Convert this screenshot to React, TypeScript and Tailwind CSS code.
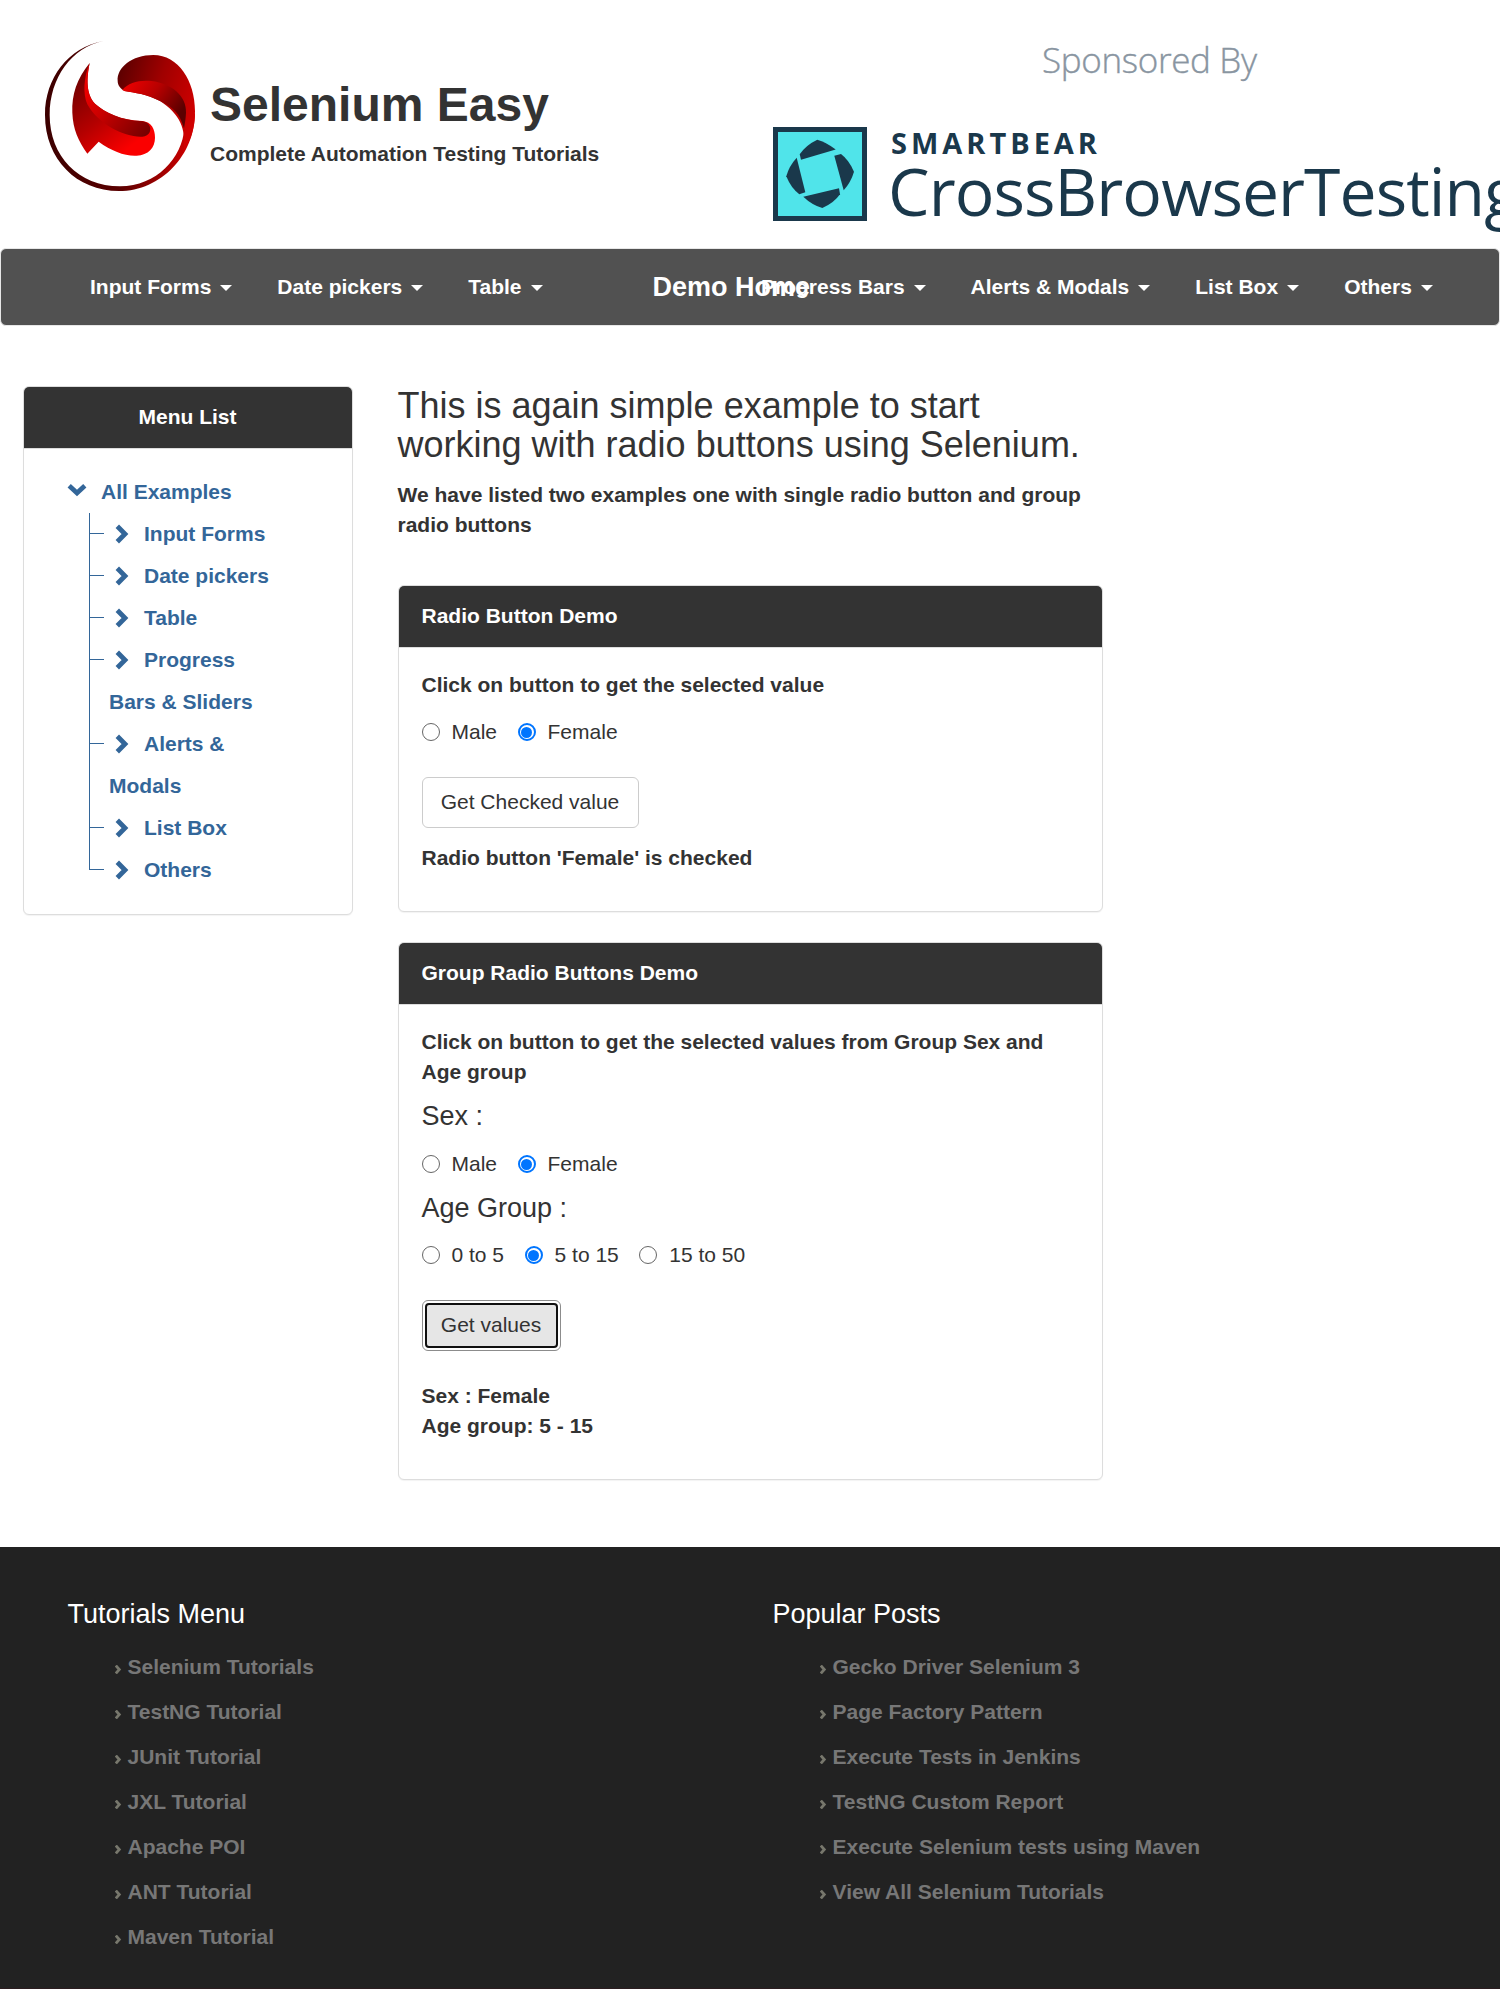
import React from "react";

function Logo() {
  return (
    <svg width="150" height="150" viewBox="0 0 450 450" className="block shrink-0">
      <defs>
        <linearGradient id="ring" x1="0" y1="0" x2="1" y2="0">
          <stop offset="0" stopColor="#3c0000" />
          <stop offset="0.5" stopColor="#5a0000" />
          <stop offset="1" stopColor="#d80000" />
        </linearGradient>
        <linearGradient id="top" x1="0" y1="0.2" x2="1" y2="0.6">
          <stop offset="0" stopColor="#5c0000" />
          <stop offset="0.5" stopColor="#a00000" />
          <stop offset="1" stopColor="#d00000" />
        </linearGradient>
        <linearGradient id="fold" x1="0" y1="0" x2="1" y2="0.5">
          <stop offset="0" stopColor="#f40000" />
          <stop offset="0.5" stopColor="#b80000" />
          <stop offset="1" stopColor="#5a0000" />
        </linearGradient>
        <linearGradient id="body" gradientUnits="userSpaceOnUse" x1="90" y1="140" x2="240" y2="330">
          <stop offset="0" stopColor="#7a0000" />
          <stop offset="0.5" stopColor="#b40000" />
          <stop offset="1" stopColor="#fa0000" />
        </linearGradient>
        <linearGradient id="lowFold" gradientUnits="userSpaceOnUse" x1="130" y1="140" x2="310" y2="280">
          <stop offset="0" stopColor="#ea0000" />
          <stop offset="0.35" stopColor="#c80000" />
          <stop offset="1" stopColor="#720000" />
        </linearGradient>
      </defs>
      <path
        d="M175 0C70 20 0 110 0 222C0 355 95 450 222 450C350 450 450 340 450 215L418 262C412 350 335 436 225 436C100 436 14 345 14 222C14 110 80 20 175 0Z"
        fill="url(#ring)"
      />
      <path
        d="M218 120C215 80 260 42 325 42C400 42 450 120 450 210C450 262 436 300 416 330C424 262 405 220 345 180C305 160 270 155 240 150C226 144 218 132 218 120Z"
        fill="url(#top)"
      />
      <path
        d="M232 147C250 124 285 116 320 120C380 128 425 165 423 215C422 235 420 245 417 262C405 218 385 198 345 180C305 160 270 155 240 151Z"
        fill="url(#fold)"
      />
      <path
        d="M134 66C95 115 80 160 82 215C84 265 100 300 127 338L161 302C200 330 240 346 275 344C310 342 330 320 330 290C330 265 320 243 292 240C230 238 180 215 150 188C122 158 125 110 134 66Z"
        fill="url(#body)"
      />
      <path
        d="M134 66C115 110 114 160 127 190C160 250 240 290 292 287C314 286 321 266 312 252C306 243 297 240 285 240C230 238 180 215 150 188C122 158 125 110 134 66Z"
        fill="url(#lowFold)"
      />
    </svg>
  );
}

function Sponsor() {
  return (
    <svg width="730" height="207" viewBox="770 25 730 207" className="block shrink-0">
      <text
        x="1042"
        y="72.500"
        fontSize="35"
        textLength="215"
        fill="#8995a1"
        stroke="#8995a1"
        strokeWidth="0.400"
        fontFamily="Open Sans, sans-serif"
        fontWeight="300"
      >
        Sponsored By
      </text>
      <rect x="775.500" y="129.500" width="89" height="89" fill="#50e4ea" stroke="#1a384b" strokeWidth="5" />
      <g fill="#1a384b">
        <path d="M817.300 139.700Q826 142 835.700 149.500L801 159.700L799.700 154.300Q806 145 817.300 139.700Z" />
        <path d="M834.300 155.700L841 154Q849 160 854 171.700Q851 182 843.700 190.300Z" />
        <path d="M803.300 196.700L839 188.300L840 194.300Q834 203 822.300 208Q812 205 803.300 196.700Z" />
        <path d="M796.700 157.700L805.300 192.300L799.300 194.300Q791 188 786.300 176.300Q789 166 796.700 157.700Z" />
      </g>
      <text x="891" y="153.500" fontSize="29" textLength="206" fill="#1a384b" fontFamily="Open Sans, sans-serif" fontWeight="700">
        SMARTBEAR
      </text>
      <text x="888" y="216" fontSize="66" textLength="632" fill="#1a384b" fontFamily="Open Sans, sans-serif">
        CrossBrowserTesting
      </text>
    </svg>
  );
}

function NavItem({ label }: { label: string }) {
  return (
    <a className="flex items-center px-[22.5px] leading-[30px] whitespace-nowrap">
      {label}
      <span className="ml-[9px] mt-[1px] h-0 w-0 border-x-[6px] border-t-[6px] border-x-transparent border-t-white" />
    </a>
  );
}

function Chevron({ down = false }: { down?: boolean }) {
  return down ? (
    <svg width="20" height="14" viewBox="0 0 20 14" className="block shrink-0">
      <path d="M2.200 2.800L10 10L17.800 2.800" fill="none" stroke="#336699" strokeWidth="4.800" />
    </svg>
  ) : (
    <svg width="14" height="20" viewBox="0 0 14 20" className="block shrink-0">
      <path d="M2.300 2.200L10 10L2.300 17.800" fill="none" stroke="#336699" strokeWidth="4.800" />
    </svg>
  );
}

function TreeItem({ first, rest, last = false }: { first: string; rest?: string; last?: boolean }) {
  return (
    <li className="flex">
      <div className="flex w-[15px] flex-col">
        <div className="h-[21px] border-b border-l border-[#336699]" />
        <div className={last ? "flex-1" : "flex-1 border-l border-[#336699]"} />
      </div>
      <div className="leading-[42px]">
        <div className="flex items-center">
          <span className="ml-[11px] mr-[15px]">
            <Chevron />
          </span>
          {first}
        </div>
        {rest && <div className="pl-[5px]">{rest}</div>}
      </div>
    </li>
  );
}

function Radio({ label, checked = false }: { label: string; checked?: boolean }) {
  return (
    <label className="mr-[20.5px] flex items-center">
      <span
        className={
          checked
            ? "mr-[12px] flex h-[18px] w-[18px] items-center justify-center rounded-full border-2 border-[#0075ff] bg-white"
            : "mr-[12px] flex h-[18px] w-[18px] rounded-full border-[1.5px] border-[#666] bg-white"
        }
      >
        {checked && <span className="h-[11px] w-[11px] shrink-0 rounded-full bg-[#0075ff]" />}
      </span>
      {label}
    </label>
  );
}

function Panel({ title, className, center = false, children }: { title: string; className: string; center?: boolean; children: React.ReactNode }) {
  return (
    <section className={"flex flex-col rounded-[6px] border border-[#ddd] bg-white shadow-[0_1px_1px_rgba(0,0,0,0.05)] " + className}>
      <h3
        className={
          "h-[62px] rounded-t-[5px] border-b border-[#ddd] bg-[#333] px-[23px] pt-[15px] font-bold text-white " +
          (center ? "text-center" : "")
        }
      >
        {title}
      </h3>
      {children}
    </section>
  );
}

function FooterColumn({ title, items }: { title: string; items: string[] }) {
  return (
    <div className="w-[705px]">
      <h4 className="text-[27px] leading-[30px] text-white">{title}</h4>
      <ul className="mt-[15px] pl-[47px] font-bold text-[#777]">
        {items.map((item) => (
          <li key={item} className="flex h-[45px] items-center">
            <svg width="7" height="9" viewBox="0 0 7 9" className="mr-[6px] mt-[6px] block">
              <path d="M0.800 0.600L4.300 4.500L0.800 8.400" fill="none" stroke="#77776c" strokeWidth="2.800" />
            </svg>
            {item}
          </li>
        ))}
      </ul>
    </div>
  );
}

export default function App() {
  return (
    <div className="flex h-[1989px] w-[1500px] flex-col overflow-hidden bg-white font-['Liberation_Sans',Arial,sans-serif] text-[21px] leading-[30px] text-[#333]">
      <header className="flex h-[248px] shrink-0">
        <div className="flex w-[770px] pl-[45px] pt-[41px]">
          <Logo />
          <div className="pl-[15px] pt-[38px] font-bold">
            <h1 className="text-[48px] leading-[52px]">Selenium Easy</h1>
            <p className="mt-[8px]">Complete Automation Testing Tutorials</p>
          </div>
        </div>
        <div className="pt-[25px]">
          <Sponsor />
        </div>
      </header>

      <nav className="relative flex h-[78px] shrink-0 items-center rounded-[6px] border border-[#e7e7e7] bg-[#515151] font-bold text-white">
        <div className="ml-[66.500px] flex w-[671px]">
          <NavItem label="Input Forms" />
          <NavItem label="Date pickers" />
          <NavItem label="Table" />
        </div>
        <div className="flex">
          <NavItem label="Progress Bars" />
          <NavItem label="Alerts & Modals" />
          <NavItem label="List Box" />
          <NavItem label="Others" />
        </div>
        <span className="absolute left-[651.500px] top-[23px] text-[27px] leading-[30px] whitespace-nowrap">Demo Home</span>
      </nav>

      <main className="flex h-[1221px] shrink-0 items-start">
        <Panel title="Menu List" center className="ml-[22.500px] mt-[60px] h-[529px] w-[330px]">
          <div className="pl-[43.500px] pt-[22px] font-bold text-[#336699]">
            <div className="flex h-[42px] items-center">
              <span className="-mt-[4px] mr-[14px]">
                <Chevron down />
              </span>
              All Examples
            </div>
            <ul className="pl-[22px]">
              <TreeItem first="Input Forms" />
              <TreeItem first="Date pickers" />
              <TreeItem first="Table" />
              <TreeItem first="Progress" rest="Bars & Sliders" />
              <TreeItem first="Alerts &" rest="Modals" />
              <TreeItem first="List Box" />
              <TreeItem first="Others" last />
            </ul>
          </div>
        </Panel>

        <div className="ml-[45px] w-[705px] pt-[60px]">
          <h2 className="text-[36px] leading-[39px]">This is again simple example to start working with radio buttons using Selenium.</h2>
          <p className="mt-[16px] font-bold">We have listed two examples one with single radio button and group radio buttons</p>

          <Panel title="Radio Button Demo" className="mt-[45px] h-[327px]">
            <div className="px-[23px] pt-[22px]">
              <p className="font-bold">Click on button to get the selected value</p>
              <div className="mt-[17px] flex">
                <Radio label="Male" />
                <Radio label="Female" checked />
              </div>
              <button className="mt-[30px] block h-[51px] w-[217px] rounded-[6px] border border-[#ccc] bg-white pb-px leading-[30px]">
                Get Checked value
              </button>
              <p className="mt-[15px] font-bold">Radio button 'Female' is checked</p>
            </div>
          </Panel>

          <Panel title="Group Radio Buttons Demo" className="mt-[30px] h-[538px]">
            <div className="px-[23px] pt-[22px]">
              <p className="font-bold">Click on button to get the selected values from Group Sex and Age group</p>
              <h5 className="mt-[14px] text-[27px] leading-[30px]">Sex :</h5>
              <div className="mt-[18px] flex">
                <Radio label="Male" />
                <Radio label="Female" checked />
              </div>
              <h5 className="mt-[14px] text-[27px] leading-[30px]">Age Group :</h5>
              <div className="mt-[17px] flex">
                <Radio label="0 to 5" />
                <Radio label="5 to 15" checked />
                <Radio label="15 to 50" />
              </div>
              <button className="mt-[30px] block h-[51px] w-[139px] rounded-[6px] border border-[#8c8c8c] bg-white p-[2px]">
                <span className="flex h-full items-center justify-center rounded-[4px] border-2 border-[#101010] bg-[#e6e6e6] pb-px">Get values</span>
              </button>
              <p className="mt-[30px] font-bold">Sex : Female</p>
              <p className="font-bold">Age group: 5 - 15</p>
            </div>
          </Panel>
        </div>
      </main>

      <footer className="flex flex-1 border-b border-[#2b1d20] bg-[#222] pl-[67.500px] pt-[52px]">
        <FooterColumn
          title="Tutorials Menu"
          items={["Selenium Tutorials", "TestNG Tutorial", "JUnit Tutorial", "JXL Tutorial", "Apache POI", "ANT Tutorial", "Maven Tutorial"]}
        />
        <FooterColumn
          title="Popular Posts"
          items={[
            "Gecko Driver Selenium 3",
            "Page Factory Pattern",
            "Execute Tests in Jenkins",
            "TestNG Custom Report",
            "Execute Selenium tests using Maven",
            "View All Selenium Tutorials",
          ]}
        />
      </footer>
    </div>
  );
}
